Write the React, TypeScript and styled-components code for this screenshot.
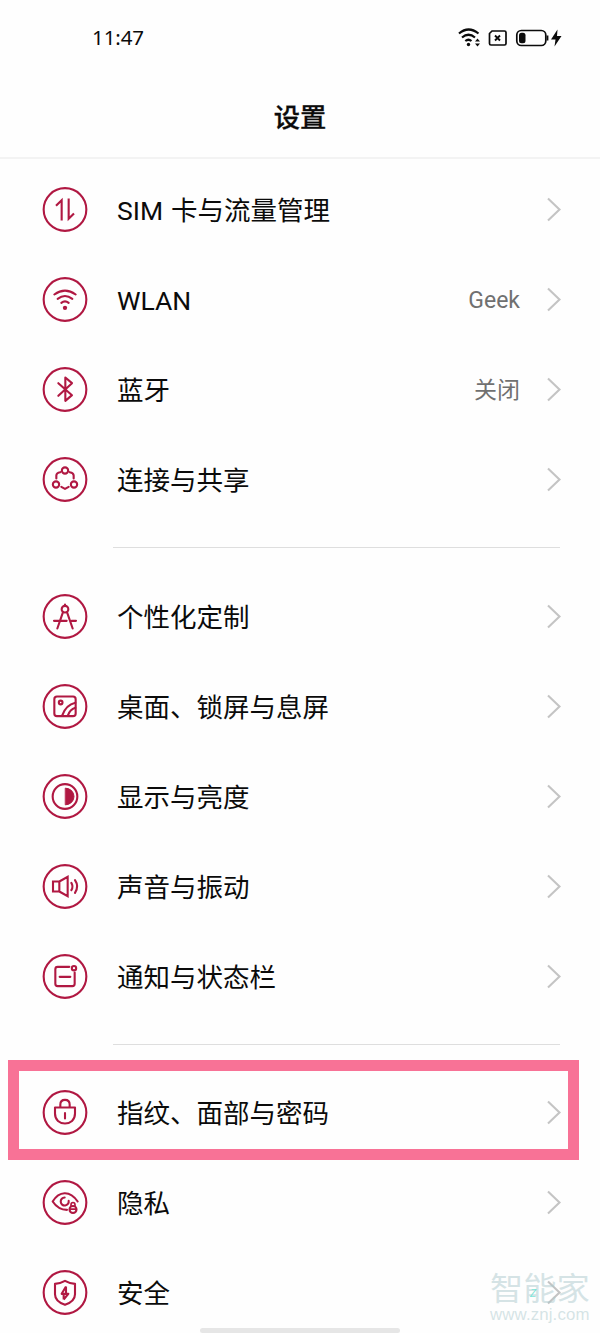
import React from "react";
import styled, { createGlobalStyle } from "styled-components";

const GlobalStyle = createGlobalStyle`
  * { box-sizing: border-box; }
  body {
    margin: 0;
    background: #fefefe;
    color: #0b0b0b;
    font-family: Roboto, "Noto Sans CJK SC", sans-serif;
  }
`;

const Screen = styled.main`
  position: relative;
  width: 600px;
  height: 1333px;
  overflow: hidden;
  background: #fefefe;
`;

const StatusBar = styled.div`
  display: flex;
  justify-content: space-between;
  align-items: center;
  height: 76px;
  padding: 0 36px 0 92px;
`;

const Clock = styled.time`
  padding-bottom: 2px;
  font: 400 20.5px/28px "Noto Sans", sans-serif;
  letter-spacing: -0.1px;
`;

const StatusIcons = styled.svg`
  display: block;
  width: 108px;
  height: 24px;
`;

const Header = styled.header`
  display: flex;
  justify-content: center;
  align-items: center;
  height: 83px;
  border-bottom: 2px solid #f3f3f3;
`;

const Title = styled.h1`
  margin: 0 0 2px;
  font: 500 26.3px/40px "Noto Sans CJK SC", sans-serif;
  -webkit-text-stroke: 0.3px currentColor;
`;

const Group = styled.section<{ $top: number }>`
  padding-top: ${(p) => p.$top}px;
`;

const Divider = styled.hr`
  height: 1px;
  margin: 23px 40px 0 113px;
  border: 0;
  background: #dedede;
`;

const Row = styled.div`
  position: relative;
  display: flex;
  align-items: center;
  height: 90px;
  padding: 0 38px 0 42px;
`;

const Badge = styled.svg`
  flex: none;
  width: 46px;
  height: 46px;
  fill: none;
  stroke: #b01842;
  stroke-width: 6.3;
  stroke-linecap: round;
  stroke-linejoin: round;
`;

const Label = styled.span`
  flex: 1;
  margin-left: 29px;
  padding-top: 4px;
  font-size: 26.5px;
  line-height: 40px;
  word-spacing: 1.3px;
`;

const Value = styled.span`
  margin-right: 26px;
  padding-top: 4px;
  color: #707070;
  font-size: 23px;
  line-height: 36px;
`;

const Arrow = styled.svg`
  flex: none;
  width: 16px;
  height: 26px;
  fill: none;
  stroke: #c4c4c4;
  stroke-width: 2.1;
`;

const Highlight = styled.div`
  position: absolute;
  top: -7px;
  left: 8px;
  width: 571px;
  height: 100px;
  border: 11px solid #f87296;
  pointer-events: none;
`;

const Watermark = styled.div`
  position: absolute;
  top: 1269px;
  left: 490px;
  width: 100px;
  color: rgba(172, 201, 205, 0.5);
`;

const WatermarkName = styled.div`
  font: 400 33.3px/36px "Noto Sans CJK SC", sans-serif;
  transform: scaleY(0.94);
`;

const WatermarkUrl = styled.div`
  font: 400 16.8px/19px "Liberation Sans", sans-serif;
  letter-spacing: 0.15px;
`;

const WatermarkMark = styled.span`
  position: absolute;
  top: 19px;
  left: 40px;
  color: #7ee5d8;
  font: italic 400 10px/12px "Liberation Sans", sans-serif;
`;

const HomeBar = styled.div`
  position: absolute;
  bottom: 0;
  left: 200px;
  width: 200px;
  height: 5px;
  border-radius: 3px;
  background: #e6e6e6;
`;

const icons = {
  sim: <path d="M-27-11-10-28V33M11-33V28L27 12" strokeLinecap="butt" strokeLinejoin="miter" />,
  wifi: (
    <>
      <path d="M-32-15Q0-38 32-15M-22-2Q0-19 22-2M-11 10Q0 1 11 10" />
      <circle cy="25" r="6.5" fill="#b01842" stroke="none" />
    </>
  ),
  bluetooth: <path d="M-20-19 21 17 1 34V-36L21-19-20 19" />,
  share: (
    <>
      <circle cy="-27" r="9.5" />
      <circle cx="-27" cy="15" r="9.5" />
      <circle cx="27" cy="15" r="9.5" />
      <path d="M-14-22Q-26-20-26-12V-3M14-22Q26-20 26-12V-3M-11 22 0 28 11 22" />
    </>
  ),
  compass: (
    <>
      <circle cy="-22" r="10" />
      <path d="M0-36V-32M-6-13-23 36M6-13 23 36M-33 13H5M20 13H33" />
    </>
  ),
  picture: (
    <>
      <rect x="-32" y="-30" width="64" height="59" rx="8" />
      <circle cx="-13" cy="-12" r="5.5" />
      <path d="M-9 28Q3-5 31-11M8 28Q15 9 31 4" />
    </>
  ),
  display: (
    <>
      <circle r="37" />
      <path d="M2-25A25 25 0 0 1 2 25Z" fill="#b01842" strokeWidth="3" />
    </>
  ),
  sound: (
    <path d="M-36-15H-17V15H-36ZM-17-15 8-29V29L-17 15M19-11Q26 0 19 11M30-19Q43 0 30 19" strokeLinejoin="miter" />
  ),
  notice: (
    <>
      <path d="M13-29H-22Q-29-29-29-22V22Q-29 29-22 29H22Q29 29 29 22V-12M-16 1H16" />
      <circle cx="27" cy="-25" r="6.5" />
    </>
  ),
  lock: (
    <path d="M-30-15H30V3C30 23 16 33 0 33S-30 23-30 3ZM-14-15V-24Q-14-38 0-38T14-24V-15M0 2V18" />
  ),
  privacy: (
    <>
      <path d="M38-3C14-38-18-34-37-3C-25 15-11 22 6 22M-1-15A12 12 0 1 0 11-5" />
      <circle cx="24" cy="21" r="10.5" />
      <path d="M18 11V7Q18 0 24 0T30 7V11M17 20H31" strokeWidth="5" />
    </>
  ),
  security: (
    <>
      <path d="M-30-26Q-14-27 0-35Q14-27 30-26V5Q30 26 0 37Q-30 26-30 5Z" />
      <path d="M3-18-10 4H10L-4 21M3-18V3M-4 21V5" strokeLinecap="butt" />
    </>
  ),
};

type Item = { icon: keyof typeof icons; label: string; value?: string; highlighted?: boolean };

const groups: { top: number; items: Item[] }[] = [
  {
    top: 5,
    items: [
      { icon: "sim", label: "SIM 卡与流量管理" },
      { icon: "wifi", label: "WLAN", value: "Geek" },
      { icon: "bluetooth", label: "蓝牙", value: "关闭" },
      { icon: "share", label: "连接与共享" },
    ],
  },
  {
    top: 23,
    items: [
      { icon: "compass", label: "个性化定制" },
      { icon: "picture", label: "桌面、锁屏与息屏" },
      { icon: "display", label: "显示与亮度" },
      { icon: "sound", label: "声音与振动" },
      { icon: "notice", label: "通知与状态栏" },
    ],
  },
  {
    top: 22,
    items: [
      { icon: "lock", label: "指纹、面部与密码", highlighted: true },
      { icon: "privacy", label: "隐私" },
      { icon: "security", label: "安全" },
    ],
  },
];

function SettingRow({ icon, label, value, highlighted }: Item) {
  return (
    <Row>
      <Badge viewBox="-69 -70.5 138 138">
        <circle r="64" />
        {icons[icon]}
      </Badge>
      <Label>{label}</Label>
      {value && <Value>{value}</Value>}
      <Arrow viewBox="0 0 16 26">
        <path d="M2 2.5 13.5 13.5 2 24.5" />
      </Arrow>
      {highlighted && <Highlight />}
    </Row>
  );
}

function StatusGlyphs() {
  return (
    <StatusIcons viewBox="0 0 108 24" fill="none" stroke="#0b0b0b">
      <path d="M3 7.5Q12.5-.5 22.5 7.5M6 11.5Q12.500 6 19 11.5M9.300 15Q12.500 12.500 15.500 15" strokeWidth="2.200" />
      <circle cx="12.500" cy="18.500" r="1.700" fill="#0b0b0b" stroke="none" />
      <path d="M19 15.500 21.500 12.500 24 15.500ZM19 17.500 21.500 20.500 24 17.500Z" fill="#0b0b0b" stroke="none" />
      <path d="M36 5H48.500Q50 5 50 6.500V17.500Q50 19 48.500 19H35Q33.500 19 33.500 17.500V7.500Z" strokeWidth="1.700" />
      <path d="M39 9.500 44 14.500M44 9.500 39 14.500" strokeWidth="1.900" />
      <rect x="60.800" y="4.500" width="29" height="15" rx="4.500" strokeWidth="1.700" />
      <rect x="63" y="6.800" width="6.500" height="10.500" rx="2.500" fill="#0b0b0b" stroke="none" />
      <path d="M91.500 9.500V14.500" strokeWidth="1.800" />
      <path d="M101.500 3.500 95 13.500H99.500L98.500 20.500 105.500 10H101Z" fill="#0b0b0b" stroke="none" />
    </StatusIcons>
  );
}

export default function App() {
  return (
    <Screen>
      <GlobalStyle />
      <StatusBar>
        <Clock>11:47</Clock>
        <StatusGlyphs />
      </StatusBar>
      <Header>
        <Title>设置</Title>
      </Header>
      {groups.map((group, index) => (
        <React.Fragment key={index}>
          {index > 0 && <Divider />}
          <Group $top={group.top}>
            {group.items.map((item) => (
              <SettingRow key={item.label} {...item} />
            ))}
          </Group>
        </React.Fragment>
      ))}
      <Watermark>
        <WatermarkName>智能家</WatermarkName>
        <WatermarkUrl>www.znj.com</WatermarkUrl>
        <WatermarkMark>Z</WatermarkMark>
      </Watermark>
      <HomeBar />
    </Screen>
  );
}
